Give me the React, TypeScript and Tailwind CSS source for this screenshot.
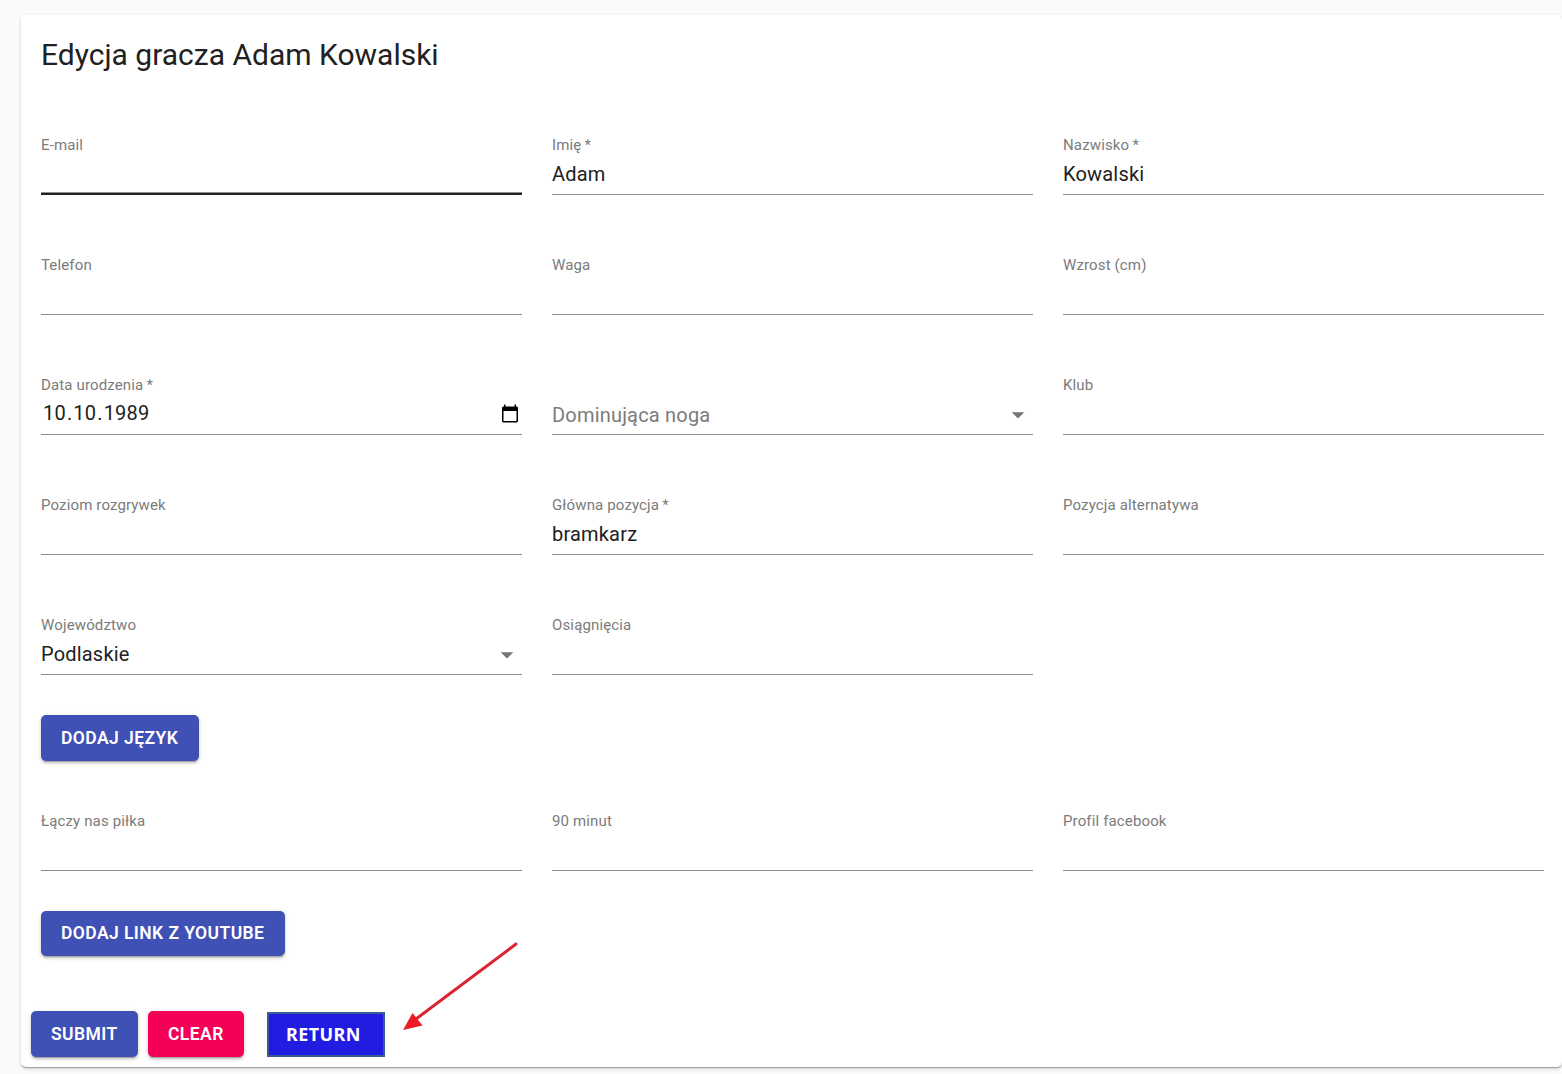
type FieldProps = {
  label?: string;
  required?: boolean;
  value?: string;
  placeholder?: string;
  kind?: "text" | "select" | "date";
  active?: boolean;
};

function Caret() {
  return (
    <svg className="mr-[2px] mt-[3px] h-[30px] w-[26px] shrink-0" viewBox="0 0 26 30" fill="#757575">
      <path d="M6.700 12.200h12.600L13 18.500z" />
    </svg>
  );
}

function CalendarIcon() {
  return (
    <svg className="mr-[3px] mt-[3px] h-[20px] w-[18px] shrink-0" viewBox="0 0 18 20">
      <path
        fillRule="evenodd"
        d="M3 0.500h1.500v2h9v-2H15v2h.4c1 0 1.600.7 1.600 1.600v12.700c0 1-.7 1.700-1.600 1.700H2.600C1.700 18.500 1 17.800 1 16.800V4.100C1 3.200 1.600 2.500 2.600 2.500H3zM2.500 7v9.900h13V7z"
        fill="#000"
      />
    </svg>
  );
}

function DateValue({ value }: { value: string }) {
  const [day, month, year] = value.split(".");
  return (
    <span className="ml-px mt-[3px] text-[20px] leading-[30px] tracking-[0.19px] text-[#212121]">
      <span className="px-px">{day}</span>.<span className="px-px">{month}</span>.<span className="px-px">{year}</span>
    </span>
  );
}

function Field({ label, required, value, placeholder, kind = "text", active }: FieldProps) {
  return (
    <div className="flex h-[60px] flex-col">
      <div className="h-[20px] whitespace-pre text-[15px] leading-[20px] tracking-[0.14px] text-[#7b7b7b]">
        {label}
        {required && "\u2009*"}
      </div>
      <div className="flex h-[39px] items-start justify-between">
        {placeholder && (
          <span className="mt-[5px] text-[20px] leading-[30px] tracking-[0.19px] text-[#7b7b7b]">{placeholder}</span>
        )}
        {value && kind === "date" && <DateValue value={value} />}
        {value && kind !== "date" && (
          <span className="mt-[4px] text-[20px] leading-[30px] tracking-[0.19px] text-[#212121]">{value}</span>
        )}
        {kind === "select" && <span className="ml-auto mt-[2px]"><Caret /></span>}
        {kind === "date" && <span className="mt-[6px]"><CalendarIcon /></span>}
      </div>
      <div className={active ? "-mt-px h-[3px] shrink-0 border-t border-[#8e8e8e] bg-[#212121]" : "h-px shrink-0 bg-[#8e8e8e]"} />
    </div>
  );
}

const shadow =
  "shadow-[0px_3px_1.25px_-2.5px_rgba(0,0,0,0.2),0px_2px_2.5px_0px_rgba(0,0,0,0.14),0px_1.25px_5px_0px_rgba(0,0,0,0.12)]";

function Button({ children, size, color = "bg-[#3f51b5]" }: { children: string; size: string; color?: string }) {
  return (
    <button
      className={`flex items-center rounded-[5px] pl-[20px] whitespace-nowrap text-[17.5px] font-semibold leading-[30px] tracking-[0.42px] text-white ${shadow} ${size} ${color}`}
    >
      {children}
    </button>
  );
}

const fields: FieldProps[] = [
  { label: "E-mail", active: true },
  { label: "Imię", required: true, value: "Adam" },
  { label: "Nazwisko", required: true, value: "Kowalski" },
  { label: "Telefon" },
  { label: "Waga" },
  { label: "Wzrost (cm)" },
  { label: "Data urodzenia", required: true, value: "10.10.1989", kind: "date" },
  { placeholder: "Dominująca noga", kind: "select" },
  { label: "Klub" },
  { label: "Poziom rozgrywek" },
  { label: "Główna pozycja", required: true, value: "bramkarz" },
  { label: "Pozycja alternatywa" },
  { label: "Województwo", value: "Podlaskie", kind: "select" },
  { label: "Osiągnięcia" },
];

const links: FieldProps[] = [{ label: "Łączy nas piłka" }, { label: "90 minut" }, { label: "Profil facebook" }];

export default function App() {
  return (
    <div className="h-[1074px] w-[1562px] overflow-hidden bg-[#fafafa] pl-[21px] pt-[15px] font-[Roboto,sans-serif]">
      <main className="h-[1052px] rounded-[5px] bg-white pl-[20px] pt-[20px] shadow-[0px_2px_1.25px_-1.25px_rgba(0,0,0,0.2),0px_1px_1.25px_0px_rgba(0,0,0,0.14),0px_1.25px_3.75px_0px_rgba(0,0,0,0.12)]">
        <h1 className="h-[40px] text-[30px] leading-[40px] text-[#212121]">Edycja gracza Adam Kowalski</h1>
        <div className="mt-[60px] grid grid-cols-[481px_481px_481px] gap-x-[30px] gap-y-[60px]">
          {fields.map((f, i) => (
            <Field key={i} {...f} />
          ))}
        </div>
        <div className="mt-[40px]">
          <Button size="h-[46px] w-[158px]">DODAJ JĘZYK</Button>
        </div>
        <div className="mt-[50px] grid grid-cols-[481px_481px_481px] gap-x-[30px]">
          {links.map((f) => (
            <Field key={f.label} {...f} />
          ))}
        </div>
        <div className="mt-[40px]">
          <Button size="h-[45px] w-[244px] pb-[2px]">DODAJ LINK Z YOUTUBE</Button>
        </div>
        <div className="relative -ml-[10px] mt-[55px] flex items-start">
          <Button size="h-[46px] w-[107px]">SUBMIT</Button>
          <div className="ml-[10px]">
            <Button size="h-[46px] w-[96px]" color="bg-[#f50057]">CLEAR</Button>
          </div>
          <button className="ml-[23px] mt-px flex h-[45px] w-[118px] items-center border-2 border-[#3a5a94] bg-[#221ce0] pl-[17px] font-['Noto_Sans',sans-serif] text-[18px] font-bold tracking-[0.4px] text-white">
            RETURN
          </button>
          <svg className="absolute left-[369px] top-[-71px] h-[95px] w-[122px]" viewBox="0 0 122 95">
            <path d="M116 4L16 79" stroke="#dc2430" strokeWidth="3" strokeLinecap="round" />
            <path d="M3 90L12.500 73L22.500 85.500z" fill="#ed1c24" />
          </svg>
        </div>
      </main>
    </div>
  );
}
